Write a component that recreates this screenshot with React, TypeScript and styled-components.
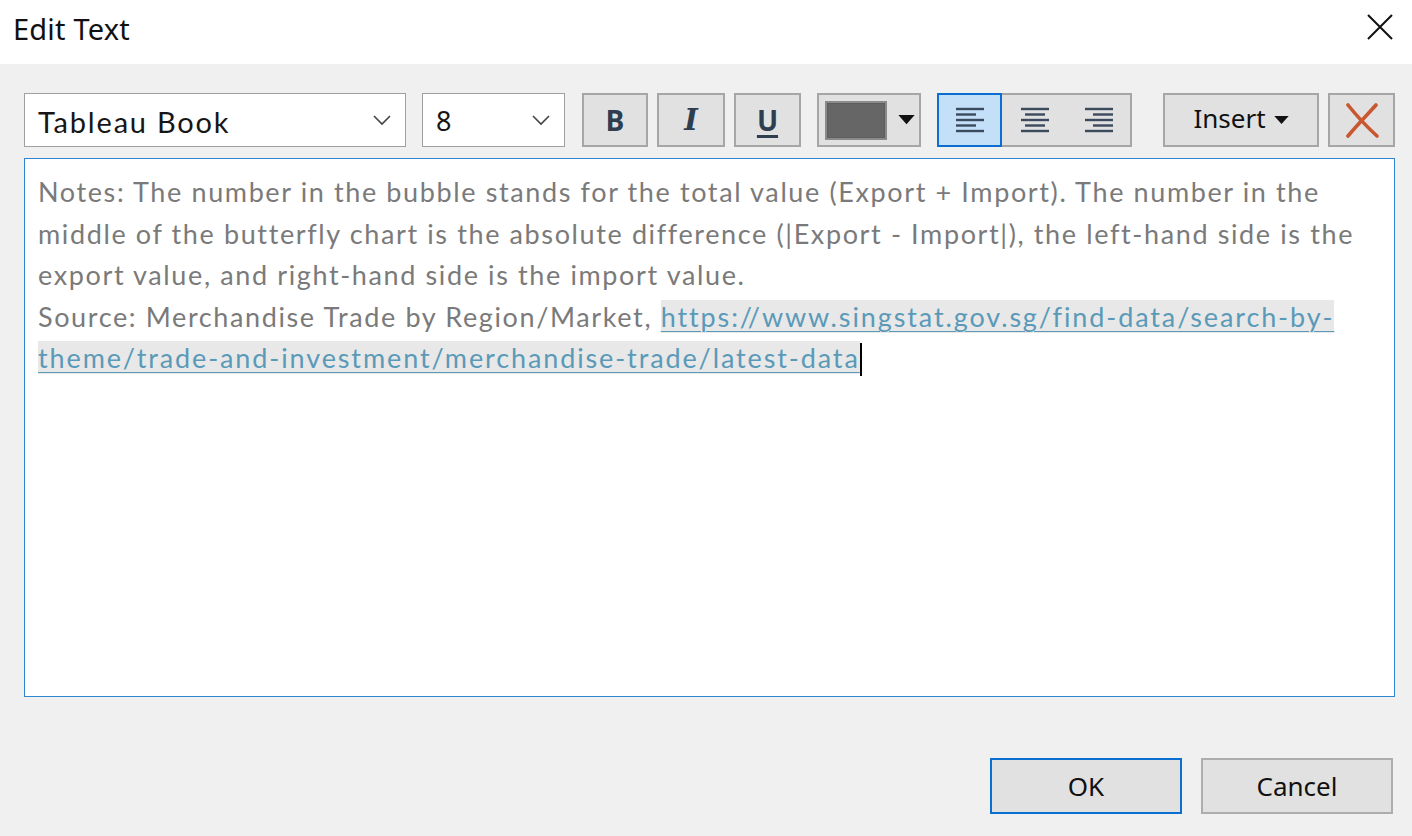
import React from "react";
import styled, { createGlobalStyle } from "styled-components";

const Global = createGlobalStyle`
  html, body { margin: 0; padding: 0; background: #f0f0f0; }
  #root { width: 1412px; height: 836px; overflow: hidden; }
  * { box-sizing: border-box; }
`;

const UI = `"Noto Sans", "Open Sans", "Liberation Sans", sans-serif`;
const BOOK = `Lato, "Open Sans", "Liberation Sans", sans-serif`;

const Dialog = styled.div`
  width: 1412px;
  height: 836px;
  display: flex;
  flex-direction: column;
  background: #f0f0f0;
  font-family: ${UI};
`;

const TitleBar = styled.div`
  height: 64px;
  background: #ffffff;
  display: flex;
  align-items: center;
  justify-content: space-between;
  padding: 0 18px 0 13px;
`;

const Title = styled.div`
  font-size: 29px;
  color: #111;
  margin-top: -8px;
  letter-spacing: 0.2px;
`;

const CloseBtn = styled.div`
  width: 28px;
  height: 28px;
  margin-top: -10px;
  display: flex;
`;

const Body = styled.div`
  flex: 1;
  display: flex;
  flex-direction: column;
  padding: 29px 17px 0 24px;
`;

const Toolbar = styled.div`
  display: flex;
  height: 54px;
  align-items: stretch;
`;

const Select = styled.div<{ $w: number; $ml?: number }>`
  width: ${(p) => p.$w}px;
  margin-left: ${(p) => p.$ml ?? 0}px;
  background: #fff;
  border: 1px solid #a0a0a0;
  display: flex;
  align-items: center;
  justify-content: space-between;
  padding: 0 14px 0 13px;
  color: #1a1a1a;
`;

const SelectText = styled.span<{ $book?: boolean }>`
  font-family: ${(p) => (p.$book ? BOOK : UI)};
  font-size: ${(p) => (p.$book ? 29 : 27)}px;
  letter-spacing: ${(p) => (p.$book ? 1.8 : 0)}px;
  margin-top: ${(p) => (p.$book ? 2 : 0)}px;
  color: #161616;
`;

const Btn = styled.div<{ $w: number; $ml: number; $active?: boolean }>`
  width: ${(p) => p.$w}px;
  margin-left: ${(p) => p.$ml}px;
  background: ${(p) => (p.$active ? "#c4e0f8" : "#e1e1e1")};
  border: 2px solid ${(p) => (p.$active ? "#0a6fd0" : "#a6a6a6")};
  display: flex;
  align-items: center;
  justify-content: center;
  color: #2e3e50;
`;

const Glyph = styled.span<{ $kind: "b" | "i" | "u" }>`
  font-family: ${(p) => (p.$kind === "i" ? `"DejaVu Serif", serif` : `"Open Sans", "Liberation Sans", sans-serif`)};
  font-weight: 700;
  font-style: ${(p) => (p.$kind === "i" ? "italic" : "normal")};
  font-size: ${(p) => (p.$kind === "i" ? 29 : 28)}px;
  text-decoration: ${(p) => (p.$kind === "u" ? "underline" : "none")};
  text-decoration-thickness: 3px;
  text-underline-offset: 4px;
  color: #2e3e50;
  line-height: 1;
`;

const ColorBtn = styled(Btn)`
  justify-content: flex-start;
  padding-left: 6px;
  gap: 11px;
`;

const Swatch = styled.div`
  width: 62px;
  height: 39px;
  background: #666666;
  border: 2px solid #8a8a8a;
  box-shadow: inset 0 0 0 1px #5e5e5e;
`;

const Group = styled.div`
  display: flex;
  margin-left: 16px;
  background: #e1e1e1;
  border: 2px solid #a6a6a6;
`;

const AlignBtn = styled.div<{ $active?: boolean; $w: number }>`
  width: ${(p) => p.$w}px;
  display: flex;
  align-items: center;
  justify-content: center;
  background: ${(p) => (p.$active ? "#c4e0f8" : "transparent")};
  margin: ${(p) => (p.$active ? "-2px 0 -2px -2px" : "0")};
  border: ${(p) => (p.$active ? "2px solid #0a6fd0" : "none")};
`;

const InsertLabel = styled.span`
  font-family: ${UI};
  font-size: 26px;
  color: #111;
  margin-top: -4px;
`;

const Editor = styled.div`
  margin-top: 11px;
  width: 1371px;
  height: 539px;
  background: #fff;
  border: 1px solid #2f86d0;
  padding: 12px 20px 0 13px;
  font-family: ${BOOK};
  font-size: 27px;
  line-height: 41.6px;
  color: #7a7a7a;
  letter-spacing: 1.62px;
`;

const Line = styled.div`
  white-space: nowrap;
`;

const Link = styled.span`
  color: #5a9ab8;
  background: #e8e8e8;
  text-decoration: underline;
  text-decoration-thickness: 1px;
  text-underline-offset: 4px;
  letter-spacing: 1.88px;
`;

const Caret = styled.span`
  display: inline-block;
  width: 2px;
  height: 33px;
  background: #000;
  vertical-align: -8px;
`;

const Footer = styled.div`
  display: flex;
  justify-content: flex-end;
  gap: 19px;
  margin-top: 61px;
  padding-right: 2px;
`;

const DlgBtn = styled.div<{ $default?: boolean }>`
  width: 192px;
  height: 56px;
  background: #e1e1e1;
  border: ${(p) => (p.$default ? "2px solid #0a6fd0" : "2px solid #adadad")};
  display: flex;
  align-items: center;
  justify-content: center;
  font-family: ${UI};
  font-size: 26px;
  color: #111;
`;

const Chevron = () => (
  <svg width="18" height="12" viewBox="0 0 18 12">
    <path d="M1 2 L9 10 L17 2" fill="none" stroke="#444" strokeWidth="1.6" />
  </svg>
);

const Tri = ({ s = 16 }: { s?: number }) => (
  <svg width={s} height={s * 0.6} viewBox="0 0 16 10">
    <path d="M0 0 H16 L8 9 Z" fill="#111" />
  </svg>
);

const AlignIcon = ({ mode }: { mode: "l" | "c" | "r" }) => {
  const full = 28;
  const short = 20;
  const ys = [2, 7.5, 13, 18.5, 24];
  const lens = [full, short, full, short, full];
  return (
    <svg width="30" height="26" viewBox="0 0 30 26">
      {ys.map((y, i) => {
        const l = lens[i];
        const x = mode === "l" ? 1 : mode === "r" ? 29 - l : 15 - l / 2;
        return <rect key={i} x={x} y={y - 1.2} width={l} height={2.4} fill="#3b4a5c" />;
      })}
    </svg>
  );
};

export default function App() {
  return (
    <>
      <Global />
      <Dialog>
        <TitleBar>
          <Title>Edit Text</Title>
          <CloseBtn>
            <svg width="28" height="28" viewBox="0 0 28 28">
              <path d="M2 2 L26 26 M26 2 L2 26" stroke="#111" strokeWidth="2" />
            </svg>
          </CloseBtn>
        </TitleBar>
        <Body>
          <Toolbar>
            <Select $w={382}>
              <SelectText $book>Tableau Book</SelectText>
              <Chevron />
            </Select>
            <Select $w={143} $ml={16}>
              <SelectText>8</SelectText>
              <Chevron />
            </Select>
            <Btn $w={66} $ml={17}>
              <Glyph $kind="b">B</Glyph>
            </Btn>
            <Btn $w={68} $ml={9}>
              <Glyph $kind="i">I</Glyph>
            </Btn>
            <Btn $w={67} $ml={9}>
              <Glyph $kind="u">U</Glyph>
            </Btn>
            <ColorBtn $w={104} $ml={16}>
              <Swatch />
              <Tri s={17} />
            </ColorBtn>
            <Group>
              <AlignBtn $w={65} $active>
                <AlignIcon mode="l" />
              </AlignBtn>
              <AlignBtn $w={65}>
                <AlignIcon mode="c" />
              </AlignBtn>
              <AlignBtn $w={63}>
                <AlignIcon mode="r" />
              </AlignBtn>
            </Group>
            <Btn $w={156} $ml={31} style={{ gap: 8 }}>
              <InsertLabel>Insert</InsertLabel>
              <Tri s={15} />
            </Btn>
            <Btn $w={67} $ml={9}>
              <svg width="36" height="36" viewBox="0 0 36 36">
                <path d="M4 3 C12 13 22 24 33 34" stroke="#c9572f" strokeWidth="3.6" fill="none" strokeLinecap="round" />
                <path d="M32 3 C24 12 13 23 4 34" stroke="#c9572f" strokeWidth="3.6" fill="none" strokeLinecap="round" />
              </svg>
            </Btn>
          </Toolbar>
          <Editor>
            <Line>Notes: The number in the bubble stands for the total value (Export + Import). The number in the</Line>
            <Line>middle of the butterfly chart is the absolute difference (|Export - Import|), the left-hand side is the</Line>
            <Line>export value, and right-hand side is the import value.</Line>
            <Line>
              Source: Merchandise Trade by Region/Market, <Link>https://www.singstat.gov.sg/find-data/search-by-</Link>
            </Line>
            <Line>
              <Link>theme/trade-and-investment/merchandise-trade/latest-data</Link>
              <Caret />
            </Line>
          </Editor>
          <Footer>
            <DlgBtn $default>OK</DlgBtn>
            <DlgBtn>Cancel</DlgBtn>
          </Footer>
        </Body>
      </Dialog>
    </>
  );
}
